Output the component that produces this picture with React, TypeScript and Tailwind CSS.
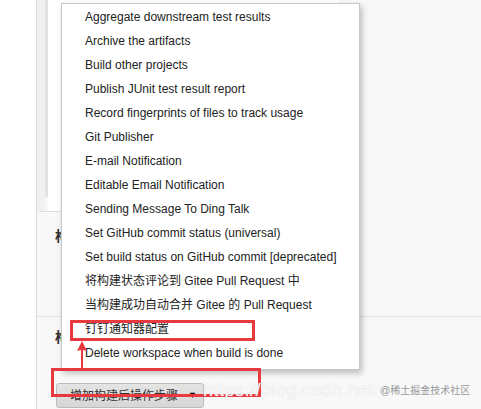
import React from 'react';

const items = [
  'Aggregate downstream test results',
  'Archive the artifacts',
  'Build other projects',
  'Publish JUnit test result report',
  'Record fingerprints of files to track usage',
  'Git Publisher',
  'E-mail Notification',
  'Editable Email Notification',
  'Sending Message To Ding Talk',
  'Set GitHub commit status (universal)',
  'Set build status on GitHub commit [deprecated]',
  '将构建状态评论到 Gitee Pull Request 中',
  '当构建成功自动合并 Gitee 的 Pull Request',
  '钉钉通知器配置',
  'Delete workspace when build is done',
];

export default function App() {
  return (
    <div className="relative w-[481px] h-[409px] overflow-hidden bg-[#f8f8f8] text-[12px] text-[#222] font-['Liberation_Sans','Noto_Sans_CJK_SC',sans-serif]">
      <div className="flex h-full">
        {/* left rail */}
        <div className="w-[37px] h-full bg-white border-r border-[#d9d9d9]" />

        <div className="flex-1 flex flex-col">
          {/* upper config panel (mostly hidden by the menu) */}
          <div className="h-[211px] flex">
            <div className="w-[8px] bg-[#f1f1f1]" />
            <div className="w-[3px] h-[197px] bg-[#e3e3e3]" />
            <div className="w-[290px] bg-white" />
          </div>
          <div className="h-px w-[290px] ml-[2px] bg-[#dcdcdc]" />

          {/* build environment section */}
          <div className="h-[104px] pl-[18px] pt-[14px]">
            <p className="text-[14px] font-bold text-[#333]">构建环境</p>
          </div>
          <div className="h-px bg-[#e0e0e0]" />

          {/* post-build section */}
          <div className="flex-1 pl-[19px] pt-[10px]">
            <p className="text-[14px] font-bold text-[#333] ml-[-1px]">构建后操作</p>
            <button className="mt-[35px] flex items-center w-[148px] h-[25px] rounded-[3px] border border-[#bcbcbc] bg-gradient-to-b from-[#e4e4e4] to-[#d6d6d6] pl-[13px] text-[12px] text-[#333]">
              <span>增加构建后操作步骤</span>
              <span className="ml-[10px] text-[9px] text-black">▼</span>
            </button>
          </div>
        </div>
      </div>

      {/* dropdown menu */}
      <div className="absolute left-[61px] top-[3px] w-[299px] bg-white border border-[#c8c8c8] pt-[1px] pb-[4px] shadow-[2px_3px_6px_rgba(0,0,0,0.25)]">
        {items.map((item) => (
          <div key={item} className="h-[24px] flex items-center pl-[23px] whitespace-nowrap">
            {item}
          </div>
        ))}
      </div>

      {/* annotations */}
      <div className="absolute left-[70px] top-[320px] w-[185px] h-[21px] border-[3px] border-[#e8393e]" />
      <div className="absolute left-[51px] top-[368px] w-[210px] h-[29px] border-[3px] border-[#e8393e]" />
      <svg className="absolute left-[76px] top-[341px]" width="12" height="28" viewBox="0 0 12 28">
        <path d="M6 0 L11 10 L7 9 L7 28 L5 28 L5 9 L1 10 Z" fill="#e8393e" />
      </svg>

      {/* watermark */}
      <div className="absolute left-[203px] top-[377px] text-[18px] tracking-[0.5px] text-white/90 [text-shadow:0_0_1px_#c4c4c4] whitespace-nowrap">
        https://blog.csdn.net/weix
      </div>
      <div className="absolute left-[376px] top-[382px] pl-[4px] pr-[12px] h-[16px] flex items-center bg-[#f8f8f8]/80 text-[10px] text-[#9a9a9a] whitespace-nowrap">
        @稀土掘金技术社区
      </div>
    </div>
  );
}
